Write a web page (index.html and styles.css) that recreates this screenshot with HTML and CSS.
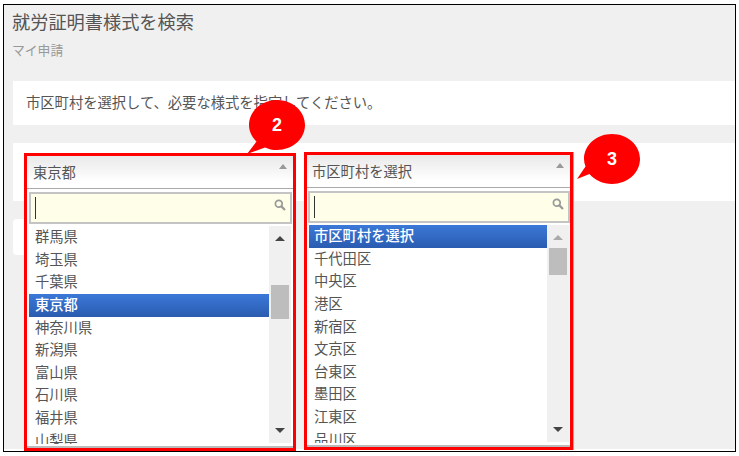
FILE: index.html
```html
<!DOCTYPE html>
<html lang="ja">
<head>
<meta charset="utf-8">
<title>就労証明書様式を検索</title>
<link rel="stylesheet" href="styles.css">
</head>
<body>
<div class="frame">
  <div class="page">
    <h1 class="title">就労証明書様式を検索</h1>
    <div class="subtitle">マイ申請</div>
    <div class="panel panel-msg">市区町村を選択して、必要な様式を指定してください。</div>
    <div class="panel panel-select"></div>
    <div class="panel panel-tail"></div>
  </div>

  <div class="dd dd-pref">
    <div class="dd-head"><span>東京都</span><i class="tri-up small"></i></div>
    <div class="dd-search"><span class="caret"></span>
      <svg class="lens" viewBox="0 0 12 12" width="12" height="12"><circle cx="4.800" cy="4.800" r="3.400" fill="none" stroke="#999" stroke-width="1.700"/><path d="M7.400 7.400L11 11" stroke="#999" stroke-width="2.200"/></svg>
    </div>
    <div class="dd-body">
      <ul class="list">
        <li>群馬県</li><li>埼玉県</li><li>千葉県</li><li class="on">東京都</li><li>神奈川県</li><li>新潟県</li><li>富山県</li><li>石川県</li><li>福井県</li><li>山梨県</li>
      </ul>
      <div class="sb">
        <i class="tri-up"></i>
        <b class="thumb thumb-pref"></b>
        <i class="tri-down"></i>
      </div>
    </div>
  </div>

  <div class="dd dd-city">
    <div class="dd-head"><span>市区町村を選択</span><i class="tri-up small"></i></div>
    <div class="dd-search"><span class="caret"></span>
      <svg class="lens" viewBox="0 0 12 12" width="12" height="12"><circle cx="4.800" cy="4.800" r="3.400" fill="none" stroke="#999" stroke-width="1.700"/><path d="M7.400 7.400L11 11" stroke="#999" stroke-width="2.200"/></svg>
    </div>
    <div class="dd-body">
      <ul class="list">
        <li class="on">市区町村を選択</li><li>千代田区</li><li>中央区</li><li>港区</li><li>新宿区</li><li>文京区</li><li>台東区</li><li>墨田区</li><li>江東区</li><li>品川区</li>
      </ul>
      <div class="sb">
        <i class="tri-up dim"></i>
        <b class="thumb thumb-city"></b>
        <i class="tri-down"></i>
      </div>
    </div>
  </div>

  <svg class="callout callout-2" viewBox="0 0 60 56" width="60" height="56">
    <path d="M30 1C45.500 1 58 12.200 58 26C58 39.800 45.500 51 30 51C25.500 51 21.500 50 18 48.400L0 55L9.500 42.500C4.800 38 2 32.300 2 26C2 12.200 14.500 1 30 1Z" fill="#f00"/>
    <text x="30" y="32" text-anchor="middle">2</text>
  </svg>
  <svg class="callout callout-3" viewBox="0 0 64 52" width="64" height="52">
    <path d="M35 1C50.500 1 63 12.200 63 26C63 39.800 50.500 51 35 51C26 51 17.500 47 12.500 41L0 46L8.500 33.500C7.500 31 7 28.500 7 26C7 12.200 19.500 1 35 1Z" fill="#f00"/>
    <text x="35" y="32" text-anchor="middle">3</text>
  </svg>
</div>
</body>
</html>
```

FILE: styles.css
```css
* { box-sizing: border-box; }
html, body { margin: 0; padding: 0; background: #fff; }
body {
  width: 739px;
  height: 456px;
  overflow: hidden;
  font-family: "Noto Sans CJK JP", "Liberation Sans", sans-serif;
  color: #555;
}
.frame {
  position: relative;
  margin: 4px 0 0 3px;
  width: 733px;
  height: 448px;
  border: 1px solid #000;
  padding-bottom: 2px;
}
.page {
  height: 100%;
  background: #f0f0f0;
  overflow: hidden;
}
.title {
  margin: 0 0 0 8px;
  font-size: 18.200px;
  font-weight: 400;
  line-height: 32px;
  color: #555;
}
.subtitle {
  margin: 3px 0 0 8px;
  font-size: 12.800px;
  line-height: 20px;
  color: #999;
}
.panel { background: #fff; margin-left: 9px; }
.panel-msg {
  margin-top: 21px;
  height: 44px;
  padding-left: 13px;
  font-size: 14.300px;
  line-height: 42px;
}
.panel-select { margin-top: 18px; height: 58px; }
.panel-tail {
  margin-top: 18px;
  height: 36px;
  width: 283px;
  border-radius: 4px 0 0 4px;
}

/* open dropdowns, laid over the page */
.dd {
  position: absolute;
  display: flex;
  flex-direction: column;
  background: #fff;
  border: 3px solid #f00;
}
.dd-pref { left: 20px; top: 148px; width: 272px; height: 298px; }
.dd-city { left: 300px; top: 147px; width: 269px; height: 298px; box-shadow: 1px 0 0 #aaa; }

.dd-head {
  position: relative;
  flex: none;
  height: 33px;
  padding-left: 5px;
  font-size: 14.300px;
  line-height: 31px;
  background: linear-gradient(#e9e9e9, #fff 80%);
  border-bottom: 1px solid #aaa;
}
.dd-pref .dd-head { padding-left: 6px; }
.dd-head .tri-up { position: absolute; right: 6px; top: 8px; }

.dd-search {
  position: relative;
  flex: none;
  height: 32px;
  margin: 3px 0 0 1px;
  background: #fffee8;
  border: 2px solid #c4c4c4;
}
.dd-pref .dd-search { margin: 3px 1px 0 2px; }
.caret {
  position: absolute;
  left: 4px;
  top: 3px;
  width: 1px;
  height: 22px;
  background: #333;
}
.lens { position: absolute; right: 4px; top: 5px; }

.dd-body {
  flex: 1;
  min-height: 0;
  display: flex;
  margin-top: 2px;
  padding: 0 0 2px 2px;
  border-bottom: 2px solid #bbb;
}
.dd-pref .dd-body { padding-right: 2px; }
.list {
  flex: 1;
  margin: 0;
  padding: 0;
  list-style: none;
  overflow: hidden;
  font-size: 14.300px;
}
.list li {
  height: 22.650px;
  padding-left: 6px;
  line-height: 20px;
  color: #555;
}
.dd-city .list li { padding-left: 5px; }
.list li.on {
  color: #fff;
  font-weight: 500;
  background: linear-gradient(#3b78d8, #2a5cb0);
}
.sb {
  position: relative;
  flex: none;
  width: 22px;
  height: 217px;
  background: #f0f0f0;
}
.dd-city .sb { margin-right: 1px; }
.thumb {
  position: absolute;
  left: 2px;
  width: 18px;
  background: #bdbdbd;
}
.thumb-pref { top: 59px; height: 34px; }
.thumb-city { top: 23px; height: 27px; }

.tri-up, .tri-down {
  display: block;
  width: 0;
  height: 0;
  border-left: 5px solid transparent;
  border-right: 5px solid transparent;
}
.tri-up { border-bottom: 5px solid #444; }
.tri-down { border-top: 5px solid #444; }
.sb .tri-up { position: absolute; left: 6px; top: 10px; }
.sb .tri-down { position: absolute; left: 6px; bottom: 10px; }
.tri-up.dim { border-bottom-color: #aaa; }
.tri-up.small {
  border-left-width: 4px;
  border-right-width: 4px;
  border-bottom: 5px solid #999;
}

/* numbered annotation bubbles */
.callout { position: absolute; display: block; overflow: visible; }
.callout text {
  font-family: "Liberation Sans", sans-serif;
  font-size: 18px;
  font-weight: 700;
  fill: #fff;
}
.callout-2 { left: 243px; top: 94px; }
.callout-3 { left: 573px; top: 128px; }
```
